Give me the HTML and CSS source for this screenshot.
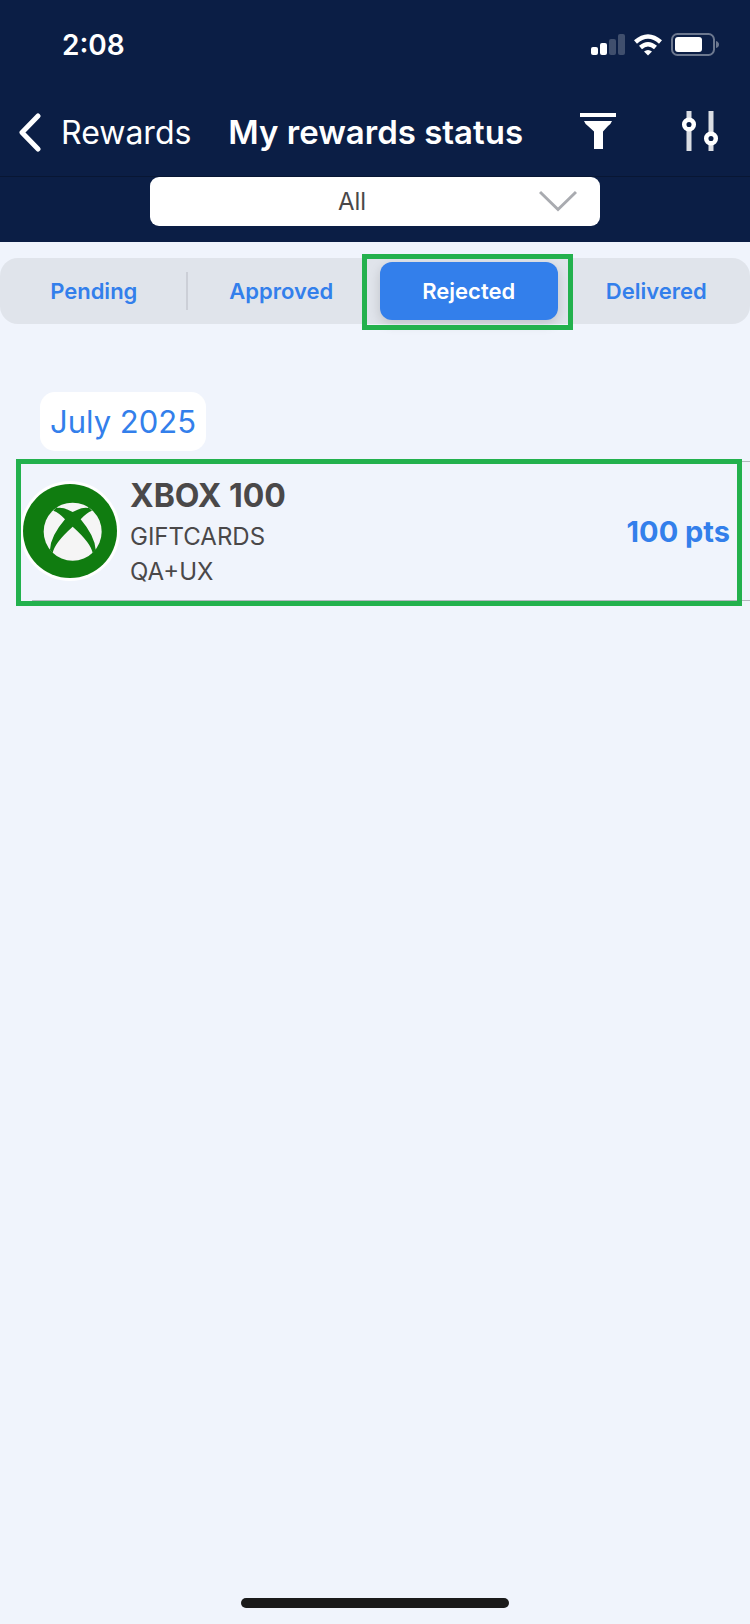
FILE: index.html
```html
<!DOCTYPE html>
<html lang="en">
<head>
  <meta charset="UTF-8">
  <meta name="viewport" content="width=device-width, initial-scale=1.0">
  <link rel="stylesheet" href="styles.css">
  <title>My rewards status</title>
</head>
<body>

  <header>
    <div class="status-bar">
      <span class="time">2:08</span>
      <div class="status-icons">
        <svg width="34" height="22" viewBox="0 0 34 22" fill="#fff">
          <rect x="0" y="13" width="7" height="8" rx="2"/>
          <rect x="9" y="9" width="7" height="12" rx="2"/>
          <rect x="18" y="5" width="7" height="16" rx="2" opacity="0.22"/>
          <rect x="27" y="0" width="7" height="21" rx="2" opacity="0.22"/>
        </svg>
        <svg width="28" height="22" viewBox="0 0 28 22" fill="none" stroke="#fff" stroke-width="4.500">
          <path d="M1.500 8 Q14 -3 26.500 8"/>
          <path d="M6.500 13.500 Q14 7 21.500 13.500"/>
          <path d="M10 17.500 Q14 14.500 18 17.500 L14 21.500 Z" fill="#fff" stroke="none"/>
        </svg>
        <svg width="48" height="24" viewBox="0 0 48 24">
          <rect x="1" y="1" width="42" height="21" rx="5.500" fill="none" stroke="#fff" stroke-opacity="0.4" stroke-width="2"/>
          <rect x="4" y="4" width="27" height="15" rx="3" fill="#fff"/>
          <path d="M45 8 Q48 9 48 11.500 Q48 14 45 15 Z" fill="#fff" fill-opacity="0.4"/>
        </svg>
      </div>
    </div>

    <nav class="nav-bar">
      <a href="#" class="back-link">
        <svg width="24" height="40" viewBox="0 0 24 40" fill="none" stroke="#fff" stroke-width="5" stroke-linecap="round" stroke-linejoin="round">
          <path d="M21 4 L5 20.500 L21 37"/>
        </svg>
        Rewards
      </a>
      <h1>My rewards status</h1>
      <div class="nav-actions">
        <button class="icon-btn" aria-label="Filter">
          <svg width="38" height="40" viewBox="0 0 38 40" fill="#fff">
            <rect x="1" y="2" width="36" height="4"/>
            <path d="M5 10 H33 Q32 13 29 15 L24 20.500 V38 H15 V20.500 L9 15 Q6 13 5 10 Z"/>
          </svg>
        </button>
        <button class="icon-btn" aria-label="Settings">
          <svg width="38" height="40" viewBox="0 0 38 40" fill="none" stroke="#fff">
            <path d="M8 0 V9 M8 18 V40 M30 0 V23 M30 32 V40" stroke-width="5" stroke-opacity="0.85"/>
            <circle cx="8" cy="13.500" r="4.800" stroke-width="4.500"/>
            <circle cx="30" cy="27.500" r="4.800" stroke-width="4.500"/>
          </svg>
        </button>
      </div>
    </nav>

    <div class="filter-bar">
      <div class="select-wrap">
        <select class="type-select" aria-label="Reward type">
          <option>All</option>
        </select>
        <svg class="select-arrow" width="38" height="22" viewBox="0 0 38 22" fill="none" stroke="#a9abb0" stroke-width="3">
          <path d="M1 2 L19 19.500 L37 2"/>
        </svg>
      </div>
    </div>
  </header>

  <main>
    <div class="tabs" role="tablist">
      <button class="tab divided" role="tab">Pending</button>
      <button class="tab" role="tab">Approved</button>
      <button class="tab selected" role="tab" aria-selected="true">Rejected</button>
      <button class="tab" role="tab">Delivered</button>
    </div>

    <h2 class="month">July 2025</h2>

    <div class="reward">
      <svg class="reward-logo" viewBox="30 33 300 300">
        <circle cx="180" cy="183" r="150" fill="#fff"/>
        <circle cx="180" cy="183" r="141" fill="#107c10"/>
        <circle cx="188" cy="185" r="87" fill="#f5f5f5"/>
        <path fill="#107c10" d="M130 122 Q148 128 165 148 Q122 198 120 239 L128 250 Q132 220 188 170 Q244 220 248 250 L257 239 Q254 198 212 148 Q229 128 246 122 L232 108 L235 114 Q217 110 188 126 Q160 110 141 114 L144 107 Z"/>
      </svg>
      <div class="reward-info">
        <h3>XBOX 100</h3>
        <p>GIFTCARDS</p>
        <p>QA+UX</p>
      </div>
      <span class="points">100 pts</span>
    </div>
  </main>

  <footer>
    <div class="home-indicator"></div>
  </footer>

</body>
</html>
```
FILE: styles.css
```css
* {
  box-sizing: border-box;
}

body {
  display: flex;
  flex-direction: column;
  min-height: 100vh;
  margin: 0;
  font-family: Inter, "Liberation Sans", sans-serif;
  color: #4a4849;
  background-color: #f0f4fc;
}

h1, h2, h3, p {
  margin: 0;
}

button {
  font-family: inherit;
  border: none;
  background: none;
  padding: 0;
  cursor: pointer;
}

svg {
  display: block;
}

header {
  color: white;
  background-color: #0b1e45;
}

/* Status bar */
.status-bar {
  display: flex;
  justify-content: space-between;
  align-items: center;
  height: 88px;
  padding: 2px 31px 0 62px;
}

.time {
  font-size: 28px;
  font-weight: 600;
}

.status-icons {
  display: flex;
  align-items: center;
  gap: 9px;
}

/* Navigation */
.nav-bar {
  display: flex;
  align-items: center;
  height: 88px;
  padding: 0 31px 0 17px;
}

.back-link {
  display: flex;
  align-items: center;
  gap: 20px;
  font-size: 32px;
  color: white;
  text-decoration: none;
}

.nav-bar h1 {
  margin-left: 37px;
  font-size: 33px;
  font-weight: 600;
}

.nav-actions {
  display: flex;
  gap: 64px;
  margin-left: auto;
  padding-bottom: 2px;
}

.filter-bar {
  height: 66px;
  border-top: 1px solid #081633;
}

.select-wrap {
  position: relative;
  width: 60%;
  margin: 0 auto;
}

.type-select {
  display: block;
  width: 100%;
  height: 49px;
  padding: 0 46px 0 0;
  border: none;
  border-radius: 9px;
  appearance: none;
  font-family: inherit;
  font-size: 24px;
  text-align: center;
  text-align-last: center;
  color: #4a4849;
  background-color: white;
}

.select-arrow {
  position: absolute;
  top: 13px;
  right: 23px;
  pointer-events: none;
}

/* Tabs */
main {
  flex: 1;
}

.tabs {
  display: grid;
  grid-template-columns: repeat(4, 1fr);
  height: 66px;
  margin-top: 16px;
  border-radius: 18px;
  background-color: #e0e4eb;
}

.tab {
  position: relative;
  font-size: 22px;
  font-weight: 600;
  color: #337feb;
}

.divided::after {
  content: "";
  position: absolute;
  top: 14px;
  right: 0;
  width: 2px;
  height: 38px;
  background-color: #cccfd7;
}

.selected {
  margin: 4px 5px;
  border-radius: 12px;
  color: white;
  background-color: #337feb;
  box-shadow: 0 4px 12px rgba(0, 0, 0, 0.15);
}

/* Highlight frames */
.selected::after,
.reward::after {
  content: "";
  position: absolute;
  border: 5px solid #23b14d;
  pointer-events: none;
}

.selected::after {
  inset: -8px -15px -10px -18px;
}

.reward::after {
  inset: -3px 8px -6px -16px;
}

/* Rewards list */
.month {
  width: fit-content;
  margin: 68px 0 10px 40px;
  padding: 0 10px;
  border-radius: 15px;
  font-size: 31px;
  font-weight: 400;
  line-height: 59px;
  color: #337feb;
  background-color: white;
}

.reward {
  position: relative;
  display: flex;
  align-items: center;
  height: 140px;
  margin-left: 32px;
  padding-right: 20px;
  border-top: 1px solid #b4b8bf;
  border-bottom: 1px solid #b4b8bf;
}

.reward-logo {
  width: 100px;
  height: 100px;
  margin-left: -12px;
}

.reward-info {
  flex: 1;
  margin-left: 10px;
  padding-top: 3px;
}

.reward-info h3 {
  margin-bottom: 3px;
  font-size: 32px;
  line-height: 40px;
}

.reward-info p {
  font-size: 24px;
  line-height: 35px;
}

.points {
  font-size: 29px;
  font-weight: 700;
  color: #337feb;
}

footer {
  padding-bottom: 16px;
}

.home-indicator {
  width: 268px;
  height: 10px;
  margin: 0 auto;
  border-radius: 5px;
  background-color: #1a1a1a;
}
```
